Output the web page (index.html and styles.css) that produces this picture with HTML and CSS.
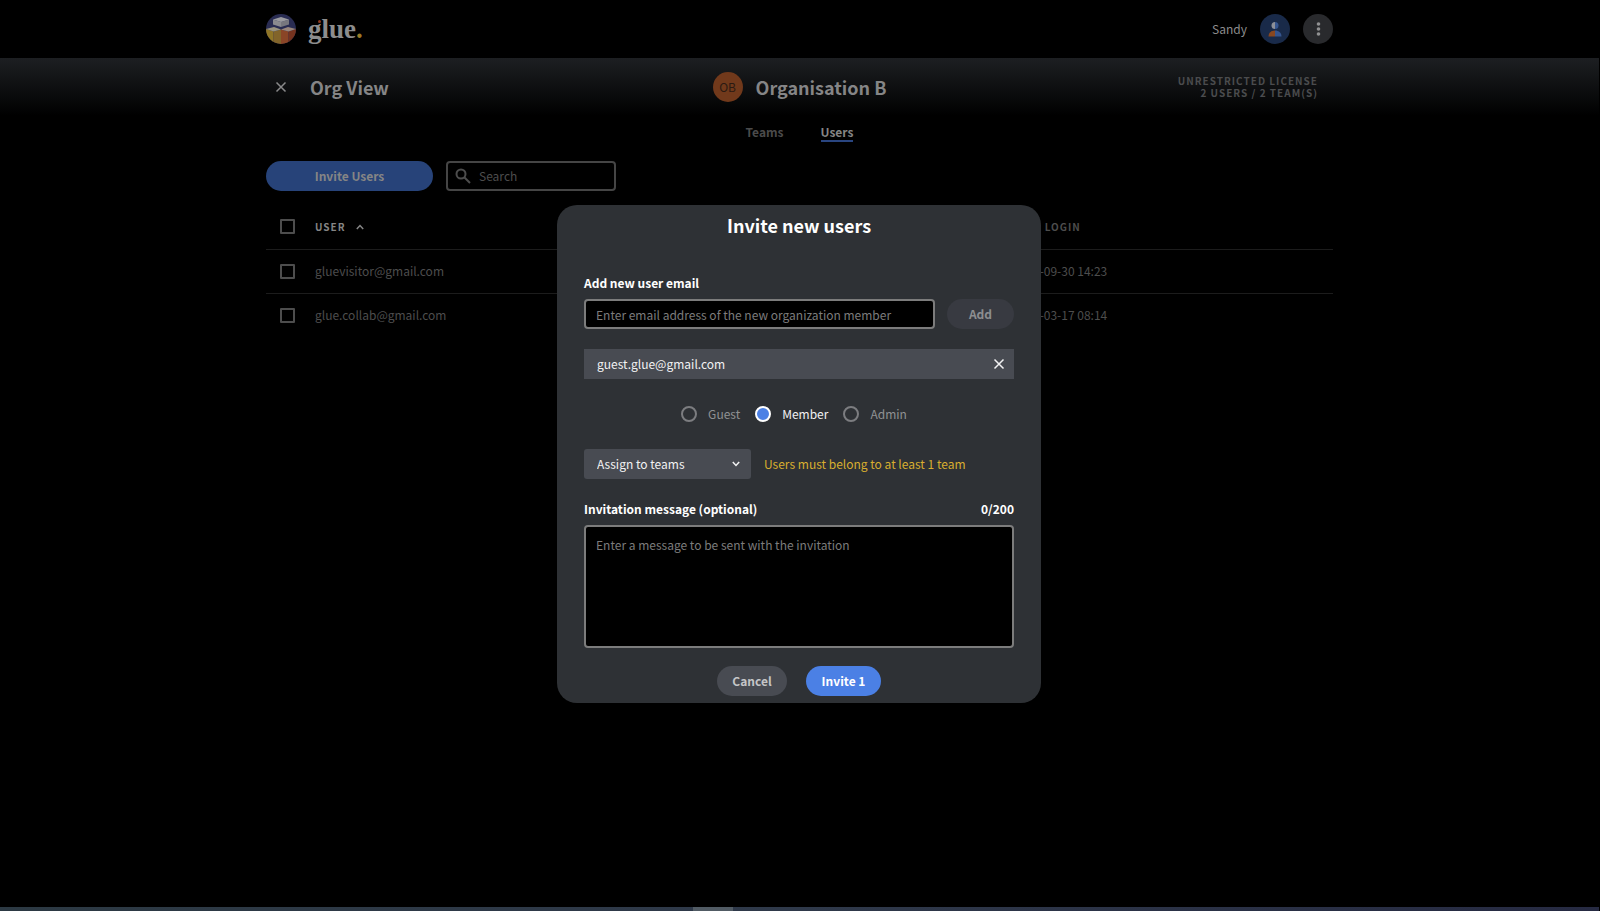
FILE: index.html
```html
<!DOCTYPE html>
<html lang="en">
<head>
<meta charset="utf-8">
<title>Glue – Org View</title>
<meta name="viewport" content="width=device-width, initial-scale=1">
<link rel="stylesheet" href="styles.css">
</head>
<body>
<div class="page">
  <header class="topbar container">
    <a class="brand" href="#">
      <svg class="brand-mark" viewBox="0 0 30 30" aria-hidden="true">
        <defs><clipPath id="disc"><circle cx="15" cy="15" r="15"/></clipPath></defs>
        <g clip-path="url(#disc)">
          <rect width="30" height="30" fill="#292c52"/>
          <path d="M0 15L7.500 17.500V30H0z" fill="#8f7526"/>
          <path d="M7.500 17.500L15 15.500V30H7.500z" fill="#82642a"/>
          <path d="M15 15.500L22.500 17.500V30H15z" fill="#8a4526"/>
          <path d="M22.500 17.500L30 15V30H22.500z" fill="#75331f"/>
          <path d="M0 15L8 13L15 15.500L7.500 17.500z" fill="#99937f"/>
          <path d="M15 15.500L22 13L30 15L22.500 17.500z" fill="#99867c"/>
          <path d="M7 5.500L15 8V13L7 10.500z" fill="#8a8a8f"/>
          <path d="M23 5.500L15 8V13L23 10.500z" fill="#77777e"/>
          <path d="M7 5.500L15 3L23 5.500L15 8z" fill="#9b9b9f"/>
        </g>
      </svg>
      <span class="brand-name">glue<span class="brand-dot">.</span></span>
      <span class="brand-ear"></span>
    </a>
    <div class="account">
      <span class="account-name">Sandy</span>
      <button class="round avatar" type="button" aria-label="Account">
        <svg width="30" height="30" viewBox="0 0 30 30" aria-hidden="true">
          <path d="M15 8a3.500 3.500 0 0 0 0 7z" fill="#8c8f98"/>
          <path d="M15 8a3.500 3.500 0 0 1 0 7z" fill="#35558f"/>
          <path d="M15 16.500c-4 0-6.500 2.500-6.500 6H15z" fill="#89471f"/>
          <path d="M15 16.500c4 0 6.500 2.500 6.500 6H15z" fill="#35558f"/>
        </svg>
      </button>
      <button class="round more" type="button" aria-label="More">
        <svg width="30" height="30" viewBox="0 0 30 30" fill="#919192" aria-hidden="true">
          <circle cx="15.500" cy="10" r="1.800"/><circle cx="15.500" cy="15" r="1.800"/><circle cx="15.500" cy="20" r="1.800"/>
        </svg>
      </button>
    </div>
  </header>

  <div class="orgbar">
    <div class="orgbar-inner container">
      <div class="orgbar-left">
        <button class="icon-button" type="button" aria-label="Close">
          <svg width="12" height="12" viewBox="0 0 12 12" fill="none" stroke="#8a8a8b" stroke-width="1.500" aria-hidden="true"><path d="M1.500 1.500l9 9M10.500 1.500l-9 9"/></svg>
        </button>
        <h1 class="heading">Org View</h1>
      </div>
      <div class="orgbar-center">
        <span class="org-badge">OB</span>
        <h2 class="heading">Organisation B</h2>
      </div>
      <p class="license">UNRESTRICTED LICENSE<br>2 USERS / 2 TEAM(S)</p>
    </div>
  </div>

  <main class="container">
    <nav class="tabs">
      <a class="tab" href="#">Teams</a>
      <a class="tab tab-active" href="#">Users</a>
    </nav>
    <div class="toolbar">
      <button class="pill invite-users" type="button">Invite Users</button>
      <label class="search">
        <svg class="search-icon" width="16" height="16" viewBox="0 0 16 16" fill="none" stroke="#4d4d4d" stroke-width="2" aria-hidden="true"><circle cx="6" cy="6" r="4.500"/><path d="M9.500 9.500L15 15"/></svg>
        <input class="search-input" type="text" placeholder="Search" aria-label="Search">
      </label>
    </div>
    <table class="users">
      <thead>
        <tr>
          <th class="col-check"><input class="check" type="checkbox" aria-label="Select all"></th>
          <th class="sorted">USER
            <svg class="sort-icon" width="8" height="6" viewBox="0 0 8 6" fill="none" stroke="#858585" stroke-width="1.500" aria-hidden="true"><path d="M.8 5L4 1.500L7.200 5"/></svg>
          </th>
          <th class="col-login">LAST LOGIN</th>
        </tr>
      </thead>
      <tbody>
        <tr>
          <td class="col-check"><input class="check" type="checkbox" aria-label="Select gluevisitor@gmail.com"></td>
          <td>gluevisitor@gmail.com</td>
          <td>2021-09-30 14:23</td>
        </tr>
        <tr>
          <td class="col-check"><input class="check" type="checkbox" aria-label="Select glue.collab@gmail.com"></td>
          <td>glue.collab@gmail.com</td>
          <td>2022-03-17 08:14</td>
        </tr>
      </tbody>
    </table>
  </main>
  <div class="edge"><span class="edge-mark"></span></div>
</div>

<div class="backdrop">
  <form class="modal" role="dialog" aria-labelledby="modal-title">
    <h2 class="modal-title" id="modal-title">Invite new users</h2>
    <label class="label" for="email">Add new user email</label>
    <div class="email-row">
      <input class="field" id="email" type="email" placeholder="Enter email address of the new organization member">
      <button class="pill add" type="button">Add</button>
    </div>
    <div class="chip">
      <span>guest.glue@gmail.com</span>
      <button class="icon-button" type="button" aria-label="Remove">
        <svg width="12" height="12" viewBox="0 0 12 12" fill="none" stroke="#f2f2f3" stroke-width="1.500" aria-hidden="true"><path d="M1.500 1.500l9 9M10.500 1.500l-9 9"/></svg>
      </button>
    </div>
    <div class="roles">
      <label class="role"><input class="radio" type="radio" name="role">Guest</label>
      <label class="role"><input class="radio" type="radio" name="role" checked>Member</label>
      <label class="role"><input class="radio" type="radio" name="role">Admin</label>
    </div>
    <div class="teams-row">
      <div class="select-wrap">
        <select class="select" aria-label="Assign to teams"><option>Assign to teams</option></select>
        <svg class="chevron" width="8" height="6" viewBox="0 0 8 6" fill="none" stroke="#f2f2f3" stroke-width="1.500" aria-hidden="true"><path d="M.8 1L4 4.500L7.200 1"/></svg>
      </div>
      <span class="warning">Users must belong to at least 1 team</span>
    </div>
    <div class="message-head">
      <label class="label" for="message">Invitation message (optional)</label>
      <span class="label">0/200</span>
    </div>
    <textarea class="field message" id="message" placeholder="Enter a message to be sent with the invitation"></textarea>
    <div class="actions">
      <button class="pill cancel" type="button">Cancel</button>
      <button class="pill submit" type="submit">Invite 1</button>
    </div>
  </form>
</div>
</body>
</html>
```
FILE: styles.css
```css
* {
  box-sizing: border-box;
}

body {
  margin: 0;
  background: #000;
  color: #4d4d4d;
  font-family: "Noto Sans CJK SC", "Noto Sans", sans-serif;
  font-size: 12px;
  line-height: 20px;
}

button,
input,
select,
textarea {
  font: inherit;
  color: inherit;
}

button {
  border: 0;
  padding: 0;
  background: none;
}

svg {
  display: block;
}

.page {
  display: flex;
  flex-direction: column;
  min-height: 100vh;
  margin-right: 1px;
}

.container {
  width: 100%;
  max-width: 1067px;
  margin: 0 auto;
}

/* Top bar */
.topbar {
  display: flex;
  align-items: center;
  justify-content: space-between;
  height: 58px;
}

.brand {
  position: relative;
  display: flex;
  align-items: center;
  gap: 12px;
  text-decoration: none;
}

.brand-mark {
  width: 30px;
  height: 30px;
}

.brand-name {
  color: #8d8d8d;
  font-family: "Liberation Serif", serif;
  font-size: 27px;
  font-weight: 700;
  line-height: 34px;
}

.brand-dot {
  color: #9b7b26;
}

.brand-ear {
  position: absolute;
  left: 52px;
  top: 8px;
  width: 3px;
  height: 3px;
  border-radius: 50%;
  background: #8c3a1f;
}

.account {
  display: flex;
  align-items: center;
  gap: 13px;
}

.account-name {
  color: #8c8c8c;
}

.round {
  width: 30px;
  height: 30px;
  border-radius: 50%;
}

.avatar {
  background: #192a49;
}

.more {
  background: #292a2d;
}

/* Organisation bar */
.orgbar {
  background: linear-gradient(#1d1f22, #000);
}

.orgbar-inner {
  display: grid;
  grid-template-columns: 1fr auto 1fr;
  align-items: center;
  height: 58px;
}

.orgbar-left {
  display: flex;
  align-items: center;
  gap: 20px;
  padding-left: 6px;
}

.orgbar-center {
  display: flex;
  align-items: center;
  gap: 13px;
}

.heading {
  margin: 0;
  color: #858586;
  font-size: 18px;
  font-weight: 700;
  line-height: 28px;
}

.org-badge {
  width: 30px;
  border-radius: 50%;
  background: #71391b;
  color: #2b1a12;
  line-height: 30px;
  text-align: center;
}

.license {
  margin: 0;
  padding-right: 15px;
  color: #4b4c4e;
  font-size: 10px;
  font-weight: 700;
  letter-spacing: 1px;
  line-height: 12px;
  text-align: right;
}

.icon-button {
  padding: 3px;
}

/* Tabs and toolbar */
.tabs {
  display: flex;
  justify-content: center;
  gap: 37px;
  padding-top: 8px;
}

.tab {
  border-bottom: 2px solid transparent;
  color: #4b4b4b;
  font-weight: 700;
  line-height: 16px;
  text-decoration: none;
}

.tab-active {
  border-color: #294580;
  color: #858585;
}

.toolbar {
  display: flex;
  gap: 13px;
  padding-top: 19px;
}

.pill {
  height: 30px;
  border-radius: 15px;
  font-weight: 700;
}

.invite-users {
  width: 167px;
  background: #274379;
  color: #858585;
}

.search {
  display: flex;
  align-items: center;
  gap: 8px;
  width: 170px;
  height: 30px;
  padding: 0 7px;
  border: 2px solid #454545;
  border-radius: 4px;
}

.search-icon {
  flex-shrink: 0;
}

.search-input {
  width: 100%;
  min-width: 0;
  padding: 0;
  border: 0;
  outline: 0;
  background: none;
}

::placeholder {
  color: inherit;
  opacity: 1;
}

/* Users table */
.users {
  width: 100%;
  margin-top: 14px;
  border-collapse: collapse;
  table-layout: fixed;
}

.users th,
.users td {
  height: 44px;
  padding: 0;
  text-align: left;
}

.users thead tr,
.users tbody tr:first-child {
  border-bottom: 1px solid #1c1c1c;
}

.users th {
  font-size: 10px;
  font-weight: 700;
  letter-spacing: 1px;
}

.users .col-check {
  width: 49px;
  padding-left: 14px;
}

.users .col-login {
  width: 320px;
}

.users .sorted {
  color: #858585;
}

.sort-icon {
  display: inline-block;
  margin-left: 7px;
  vertical-align: 1px;
}

.check {
  display: block;
  width: 15px;
  height: 15px;
  margin: 0;
  appearance: none;
  border: 2px solid #4d4d4d;
  border-radius: 1px;
}

/* Thin strip along the lower edge */
.edge {
  height: 4px;
  margin-top: auto;
  background: linear-gradient(90deg, #2c3943, #2f394a 50%, #262a42);
}

.edge-mark {
  display: block;
  width: 40px;
  height: 4px;
  margin: 0 auto;
  transform: translateX(-87px);
  background: #515b64;
}

/* Modal */
.backdrop {
  position: fixed;
  inset: 0;
  display: flex;
  align-items: flex-start;
  justify-content: center;
  padding: 205px 2px 0 0;
}

.modal {
  width: 484px;
  padding: 6px 27px 7px;
  border-radius: 20px;
  background: #2e3135;
  color: #f2f2f3;
}

.modal-title {
  margin: 0 0 34px;
  color: #fff;
  font-size: 18px;
  font-weight: 700;
  line-height: 28px;
  text-align: center;
}

.label {
  display: block;
  margin-bottom: 6px;
  color: #fff;
  font-weight: 700;
}

.email-row {
  display: flex;
  gap: 12px;
}

.field {
  flex: 1;
  min-width: 0;
  height: 30px;
  padding: 0 10px;
  border: 2px solid #7c7c7c;
  border-radius: 4px;
  outline: 0;
  background: #000;
  color: #7c7c7c;
}

.add {
  width: 67px;
  background: #383a41;
  color: #8d8e90;
}

.chip {
  display: flex;
  align-items: center;
  justify-content: space-between;
  height: 30px;
  margin-top: 20px;
  padding: 0 6px 0 13px;
  background: #484b52;
}

.roles {
  display: flex;
  justify-content: center;
  gap: 15px;
  margin: 25px 0;
  padding-right: 10px;
  color: #909193;
}

.role {
  display: flex;
  align-items: center;
  gap: 11px;
}

.role:has(:checked) {
  color: #f2f2f3;
}

.radio {
  width: 16px;
  height: 16px;
  margin: 0;
  appearance: none;
  border: 2px solid #7c7d80;
  border-radius: 50%;
}

.radio:checked {
  border-color: #fff;
  background: #4b80e5;
}

.teams-row {
  display: flex;
  align-items: center;
  gap: 13px;
}

.select-wrap {
  display: grid;
  align-items: center;
  width: 167px;
}

.select,
.chevron {
  grid-area: 1 / 1;
}

.select {
  width: 100%;
  height: 30px;
  padding: 0 13px;
  appearance: none;
  border: 0;
  border-radius: 3px;
  background: #484b52;
}

.chevron {
  justify-self: end;
  margin-right: 11px;
  pointer-events: none;
}

.warning {
  color: #d8ae2f;
}

.message-head {
  display: flex;
  justify-content: space-between;
  margin-top: 20px;
}

.message {
  display: block;
  width: 100%;
  height: 123px;
  padding: 8px 10px;
  resize: none;
}

.actions {
  display: flex;
  justify-content: center;
  gap: 19px;
  margin-top: 18px;
}

.cancel {
  width: 70px;
  background: #484b52;
  color: #c4c5c7;
}

.submit {
  width: 75px;
  background: #4b80e5;
  color: #fff;
}
```
